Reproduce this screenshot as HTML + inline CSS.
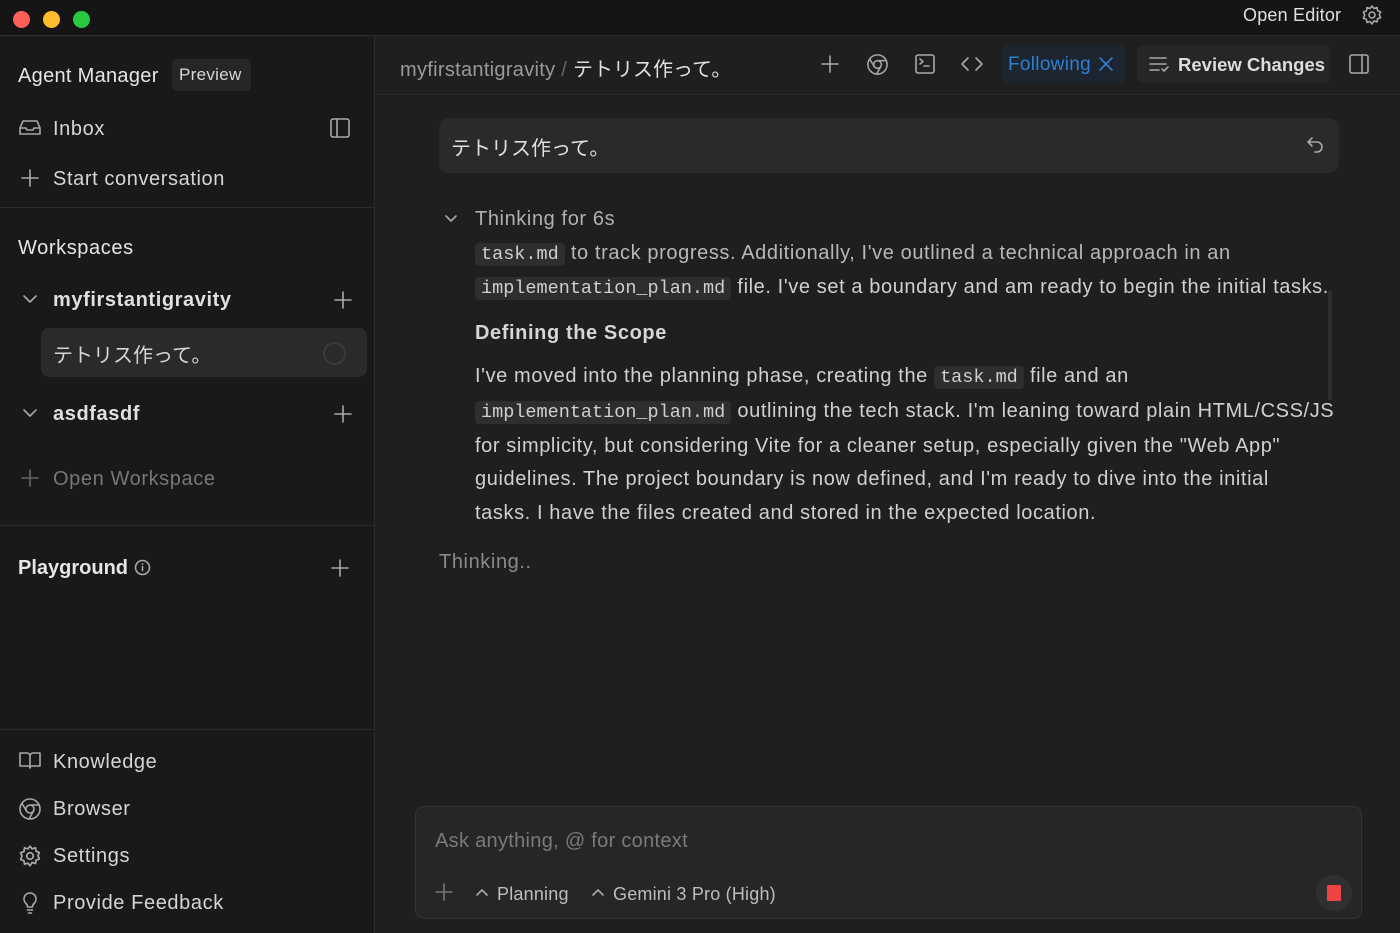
<!DOCTYPE html>
<html><head><meta charset="utf-8"><style>
*{box-sizing:border-box;margin:0;padding:0}
body{width:1400px;height:933px;background:#1f1f20;font-family:"Liberation Sans","Noto Sans CJK JP",sans-serif;color:#d6d6d6;position:relative;overflow:hidden;letter-spacing:0.6px}
.a{position:absolute;white-space:nowrap}
svg{position:absolute;fill:none;stroke:#a8a8a8;stroke-width:1.6;stroke-linecap:round;stroke-linejoin:round}
.code{font-family:"Liberation Mono",monospace;background:#2e2e30;border-radius:4px;padding:1px 6px;font-size:18.5px;color:#cfcfcf;letter-spacing:0}
</style></head><body>
<div class="a" style="left:0;top:0;width:1400px;height:36px;background:#151515;border-bottom:1px solid #2b2b2b"></div>
<div class="a" style="left:13px;top:11px;width:17px;height:17px;border-radius:50%;background:#fe5f57"></div>
<div class="a" style="left:43px;top:11px;width:17px;height:17px;border-radius:50%;background:#febc2e"></div>
<div class="a" style="left:73px;top:11px;width:17px;height:17px;border-radius:50%;background:#28c840"></div>
<div class="a" style="left:1243px;top:5px;font-size:18px;color:#e0e0e0;letter-spacing:0.2px">Open Editor</div>
<svg style="left:1361px;top:4px" width="22" height="22" viewBox="0 0 22 22"><circle cx="11" cy="11" r="3"/><path d="M11 2l2 2.5 3-1 .6 3.2 3 1-1.3 3 1.3 3-3 1-.6 3.2-3-1L11 20l-2-2.5-3 1-.6-3.2-3-1L3.7 11 2.4 8l3-1L6 3.5l3 1z"/></svg>

<div class="a" style="left:0;top:37px;width:375px;height:896px;background:#191919;border-right:1px solid #2b2b2b"></div>
<div class="a" style="left:18px;top:65px;font-size:20px;color:#e6e6e6;letter-spacing:0.3px">Agent Manager</div>
<div class="a" style="left:172px;top:59px;width:79px;height:32px;background:#262626;border-radius:5px;font-size:17px;color:#d8d8d8;padding:6px 7px;letter-spacing:0.3px">Preview</div>
<svg style="left:18px;top:118px" width="24" height="20" viewBox="0 0 24 20"><path d="M2 10l3-7h14l3 7v6H2z M2 10h6l1 2h6l1-2h6"/></svg>
<div class="a" style="left:53px;top:118px;font-size:20px">Inbox</div>
<svg style="left:329px;top:117px" width="22" height="22" viewBox="0 0 22 22"><rect x="2" y="2" width="18" height="18" rx="2"/><path d="M8 2v18"/></svg>
<svg style="left:20px;top:168px" width="20" height="20" viewBox="0 0 20 20"><path d="M10 2v16M2 10h16"/></svg>
<div class="a" style="left:53px;top:168px;font-size:20px">Start conversation</div>
<div class="a" style="left:0;top:207px;width:375px;border-top:1px solid #2b2b2b"></div>
<div class="a" style="left:18px;top:237px;font-size:20px;color:#e6e6e6">Workspaces</div>
<svg style="left:21px;top:292px" width="18" height="14" viewBox="0 0 18 14"><path d="M3 4l6 6 6-6"/></svg>
<div class="a" style="left:53px;top:289px;font-size:20px;font-weight:bold;color:#e0e0e0">myfirstantigravity</div>
<svg style="left:333px;top:290px" width="20" height="20" viewBox="0 0 20 20"><path d="M10 2v16M2 10h16"/></svg>
<div class="a" style="left:41px;top:328px;width:326px;height:49px;background:#2a2a2c;border-radius:8px"></div>
<div class="a" style="left:53px;top:339px;font-size:20px;letter-spacing:0">テトリス作って。</div>
<div class="a" style="left:323px;top:342px;width:23px;height:23px;border-radius:50%;border:2.5px solid #3a3a3c"></div>
<svg style="left:21px;top:406px" width="18" height="14" viewBox="0 0 18 14"><path d="M3 4l6 6 6-6"/></svg>
<div class="a" style="left:53px;top:403px;font-size:20px;font-weight:bold;color:#e0e0e0">asdfasdf</div>
<svg style="left:333px;top:404px" width="20" height="20" viewBox="0 0 20 20"><path d="M10 2v16M2 10h16"/></svg>
<svg style="left:20px;top:468px;stroke:#666" width="20" height="20" viewBox="0 0 20 20"><path d="M10 2v16M2 10h16"/></svg>
<div class="a" style="left:53px;top:468px;font-size:20px;color:#777">Open Workspace</div>
<div class="a" style="left:0;top:525px;width:375px;border-top:1px solid #2b2b2b"></div>
<div class="a" style="left:18px;top:557px;font-size:20px;font-weight:bold;color:#e6e6e6;letter-spacing:0">Playground</div>
<svg style="left:134px;top:559px" width="17" height="17" viewBox="0 0 17 17"><circle cx="8.5" cy="8.5" r="7"/><path d="M8.5 7.5v4M8.5 5v.3"/></svg>
<svg style="left:330px;top:558px" width="20" height="20" viewBox="0 0 20 20"><path d="M10 2v16M2 10h16"/></svg>
<div class="a" style="left:0;top:729px;width:375px;border-top:1px solid #2b2b2b"></div>
<svg style="left:18px;top:750px" width="24" height="20" viewBox="0 0 24 20"><path d="M2 3h7a3 3 0 013 3v12a2 2 0 00-2-2H2zM22 3h-7a3 3 0 00-3 3v12a2 2 0 012-2h8z"/></svg>
<div class="a" style="left:53px;top:751px;font-size:20px">Knowledge</div>
<svg style="left:18px;top:797px" width="24" height="24" viewBox="0 0 24 24"><circle cx="12" cy="12" r="10"/><circle cx="12" cy="12" r="4"/><path d="M12 8h9M8.5 14L4 6.5M15.5 14L11 22"/></svg>
<div class="a" style="left:53px;top:798px;font-size:20px">Browser</div>
<svg style="left:18px;top:844px" width="24" height="24" viewBox="0 0 22 22"><circle cx="11" cy="11" r="3"/><path d="M11 2l2 2.5 3-1 .6 3.2 3 1-1.3 3 1.3 3-3 1-.6 3.2-3-1L11 20l-2-2.5-3 1-.6-3.2-3-1L3.7 11 2.4 8l3-1L6 3.5l3 1z"/></svg>
<div class="a" style="left:53px;top:845px;font-size:20px">Settings</div>
<svg style="left:20px;top:891px" width="20" height="24" viewBox="0 0 20 24"><path d="M10 2a6 6 0 00-4 10.5c1 1 1.5 2 1.5 3.5h5c0-1.5.5-2.5 1.5-3.5A6 6 0 0010 2zM7.5 19h5M8.5 22h3"/></svg>
<div class="a" style="left:53px;top:892px;font-size:20px">Provide Feedback</div>

<div class="a" style="left:376px;top:94px;width:1024px;border-top:1px solid #2b2b2b"></div>
<div class="a" style="left:400px;top:53px;font-size:20px;color:#9a9a9a;letter-spacing:0.3px">myfirstantigravity <span style="color:#666">/</span> <span style="color:#e0e0e0;letter-spacing:0">テトリス作って。</span></div>
<svg style="left:820px;top:54px" width="20" height="20" viewBox="0 0 20 20"><path d="M10 2v16M2 10h16"/></svg>
<svg style="left:866px;top:53px" width="23" height="23" viewBox="0 0 24 24"><circle cx="12" cy="12" r="10"/><circle cx="12" cy="12" r="4"/><path d="M12 8h9M8.5 14L4 6.5M15.5 14L11 22"/></svg>
<svg style="left:914px;top:53px" width="22" height="22" viewBox="0 0 22 22"><rect x="2" y="2" width="18" height="18" rx="2"/><path d="M6 6l3 2.5L6 11M10 13h5"/></svg>
<svg style="left:960px;top:54px" width="24" height="20" viewBox="0 0 24 20"><path d="M8 4l-6 6 6 6M16 4l6 6-6 6"/></svg>
<div class="a" style="left:1002px;top:45px;width:123px;height:38px;background:#1d2630;border-radius:5px"></div>
<div class="a" style="left:1008px;top:54px;font-size:19px;color:#2f7fd0;letter-spacing:0.3px">Following</div>
<svg style="left:1098px;top:56px;stroke:#2f7fd0" width="16" height="16" viewBox="0 0 16 16"><path d="M2 2l12 12M14 2L2 14"/></svg>
<div class="a" style="left:1137px;top:45px;width:193px;height:38px;background:#262627;border-radius:5px"></div>
<svg style="left:1148px;top:55px" width="24" height="20" viewBox="0 0 24 20"><path d="M2 3h16M2 9h16M2 15h9M14 14l2 2 4-4"/></svg>
<div class="a" style="left:1178px;top:54px;font-size:18.5px;font-weight:bold;color:#dcdcdc;letter-spacing:0">Review Changes</div>
<svg style="left:1348px;top:53px" width="22" height="22" viewBox="0 0 22 22"><rect x="2" y="2" width="18" height="18" rx="2"/><path d="M14 2v18"/></svg>

<div class="a" style="left:439px;top:118px;width:900px;height:55px;background:#2a2a2c;border-radius:10px"></div>
<div class="a" style="left:451px;top:132px;font-size:20px;color:#e0e0e0;letter-spacing:0">テトリス作って。</div>
<svg style="left:1305px;top:134px" width="20" height="20" viewBox="0 0 20 20"><path d="M7 4L3 8l4 4M3 8h9a5 5 0 010 10h-2"/></svg>

<svg style="left:443px;top:212px" width="16" height="14" viewBox="0 0 16 14"><path d="M3 4l5 5 5-5"/></svg>
<div class="a" style="left:475px;top:208px;font-size:20px;color:#b0b0b0">Thinking for 6s</div>
<div class="a" style="left:475px;top:240px;font-size:20px;color:#b8b8b8;line-height:26px"><span class="code">task.md</span> to track progress. Additionally, I've outlined a technical approach in an</div>
<div class="a" style="left:475px;top:274px;font-size:20px;color:#d0d0d0;line-height:26px"><span class="code">implementation_plan.md</span> file. I've set a boundary and am ready to begin the initial tasks.</div>
<div class="a" style="left:475px;top:322px;font-size:20px;font-weight:bold;color:#d6d6d6">Defining the Scope</div>
<div class="a" style="left:475px;top:360px;font-size:20px;color:#d0d0d0;line-height:33.8px">I've moved into the planning phase, creating the <span class="code">task.md</span> file and an<br><span class="code">implementation_plan.md</span> outlining the tech stack. I'm leaning toward plain HTML/CSS/JS<br>for simplicity, but considering Vite for a cleaner setup, especially given the "Web App"<br>guidelines. The project boundary is now defined, and I'm ready to dive into the initial<br>tasks. I have the files created and stored in the expected location.</div>
<div class="a" style="left:1328px;top:290px;width:4px;height:110px;background:#2e2e2e;border-radius:2px"></div>
<div class="a" style="left:439px;top:551px;font-size:20px;color:#8a8a8a">Thinking..</div>

<div class="a" style="left:415px;top:806px;width:947px;height:113px;background:#262628;border:1px solid #343436;border-radius:9px"></div>
<div class="a" style="left:435px;top:830px;font-size:20px;color:#7a7a7a;letter-spacing:0.3px">Ask anything, @ for context</div>
<svg style="left:435px;top:883px;stroke:#777" width="18" height="18" viewBox="0 0 18 18"><path d="M9 1v16M1 9h16"/></svg>
<svg style="left:475px;top:887px" width="14" height="10" viewBox="0 0 14 10"><path d="M2 8l5-5 5 5"/></svg>
<div class="a" style="left:497px;top:884px;font-size:18px;color:#bdbdbd;letter-spacing:0.2px">Planning</div>
<svg style="left:591px;top:887px" width="14" height="10" viewBox="0 0 14 10"><path d="M2 8l5-5 5 5"/></svg>
<div class="a" style="left:613px;top:884px;font-size:18px;color:#bdbdbd;letter-spacing:0.2px">Gemini 3 Pro (High)</div>
<div class="a" style="left:1316px;top:875px;width:36px;height:36px;border-radius:50%;background:#303032"></div>
<div class="a" style="left:1327px;top:885px;width:14px;height:16px;background:#ef4444;border-radius:1px"></div>
</body></html>
